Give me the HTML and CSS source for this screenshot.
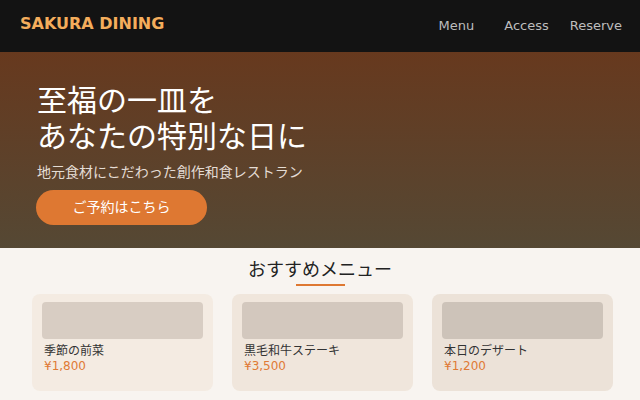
FILE: index.html
```html
<!DOCTYPE html>
<html lang="ja">
<head>
<meta charset="utf-8">
<title>SAKURA DINING</title>
<link rel="stylesheet" href="styles.css">
</head>
<body>
<header class="site-header">
  <div class="logo">SAKURA DINING</div>
  <nav class="nav">
    <a class="nav-link nav-menu" href="#">Menu</a>
    <a class="nav-link" href="#">Access</a>
    <a class="nav-link" href="#">Reserve</a>
  </nav>
</header>
<section class="hero">
  <h1 class="hero-title">至福の一皿を<br>あなたの特別な日に</h1>
  <p class="hero-sub">地元食材にこだわった創作和食レストラン</p>
  <a class="hero-btn" href="#">ご予約はこちら</a>
</section>
<section class="menu">
  <h2 class="menu-title">おすすめメニュー</h2>
  <div class="menu-line"></div>
  <div class="cards">
    <div class="card card-1">
      <div class="card-img"></div>
      <div class="card-name">季節の前菜</div>
      <div class="card-price">¥1,800</div>
    </div>
    <div class="card card-2">
      <div class="card-img"></div>
      <div class="card-name">黒毛和牛ステーキ</div>
      <div class="card-price">¥3,500</div>
    </div>
    <div class="card card-3">
      <div class="card-img"></div>
      <div class="card-name">本日のデザート</div>
      <div class="card-price">¥1,200</div>
    </div>
  </div>
</section>
</body>
</html>
```
FILE: styles.css
```css
* { box-sizing: border-box; }
html, body { margin: 0; padding: 0; }
body {
  font-family: "DejaVu Sans", "Noto Sans CJK JP", sans-serif;
  background: #f8f4f0;
  width: 640px;
  height: 400px;
  overflow: hidden;
}
.site-header {
  height: 52px;
  background: #131313;
  display: flex;
  align-items: flex-start;
  justify-content: space-between;
  padding: 0 18px 0 20px;
}
.logo {
  color: #f4ad5c;
  font-weight: bold;
  font-size: 16px;
  letter-spacing: 0;
  margin-top: 14px;
  line-height: 19px;
}
.nav {
  display: flex;
  gap: 21px;
  margin-top: 18px;
}
.nav-link {
  color: #bdbdbd;
  text-decoration: none;
  font-size: 13px;
  line-height: 16px;
}
.nav-menu { margin-right: 9px; }
.hero {
  height: 196px;
  background: linear-gradient(180deg, #67391e 0%, #554834 100%);
  padding: 31px 0 0 37px;
}
.hero-title {
  margin: 0;
  color: #ffffff;
  font-weight: normal;
  font-size: 30px;
  line-height: 36px;
}
.hero-sub {
  margin: 7px 0 0 0;
  color: #e4dcd4;
  font-size: 14px;
  line-height: 20px;
}
.hero-btn {
  display: inline-block;
  margin: 8px 0 0 -1px;
  width: 171px;
  height: 35px;
  line-height: 35px;
  text-align: center;
  background: #de7832;
  color: #ffffff;
  border-radius: 18px;
  font-size: 14px;
  text-decoration: none;
}
.menu {
  padding-top: 12px;
}
.menu-title {
  margin: 0;
  text-align: center;
  font-weight: normal;
  font-size: 18px;
  line-height: 20px;
  color: #222222;
}
.menu-line {
  width: 49px;
  height: 2px;
  background: #de7832;
  margin: 4px auto 8px;
  position: relative;
  left: 0.5px;
}
.cards {
  display: grid;
  grid-template-columns: repeat(3, 181px);
  gap: 19px;
  padding-left: 32px;
}
.card {
  height: 97px;
  border-radius: 8px;
  padding: 8px 10px 0;
}
.card-1 { background: #f4ebe2; }
.card-2 { background: #f0e6dc; }
.card-3 { background: #ece2d8; }
.card-img {
  height: 37px;
  border-radius: 4px;
}
.card-1 .card-img { background: #d8cdc3; }
.card-2 .card-img { background: #d3c8be; }
.card-3 .card-img { background: #cdc3b9; }
.card-name {
  margin: 5px 0 0 2px;
  font-size: 12px;
  line-height: 15px;
  color: #333333;
}
.card-price {
  margin-left: 2px;
  font-size: 12px;
  line-height: 15px;
  color: #e07a35;
}
```
